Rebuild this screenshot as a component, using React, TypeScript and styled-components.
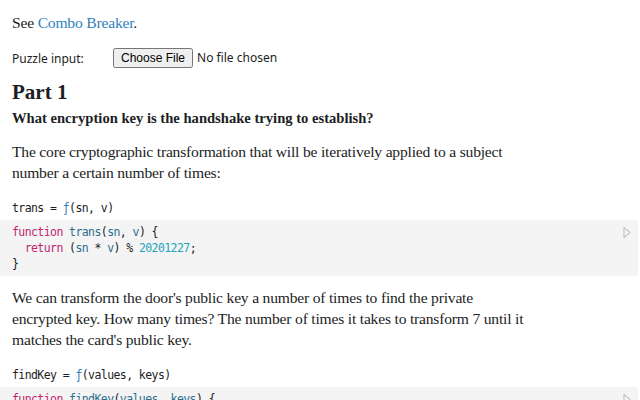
import React from "react";
import styled, { createGlobalStyle } from "styled-components";

const GlobalStyle = createGlobalStyle`
  html, body {
    margin: 0;
    padding: 0;
    background: #fff;
  }
  body {
    font-family: "Liberation Serif", serif;
    color: #1b1e23;
    overflow: hidden;
  }
`;

const Notebook = styled.div`
  display: flex;
  flex-direction: column;
  padding-top: 12px;
`;

const Prose = styled.p`
  font-size: 15.6px;
  letter-spacing: -0.2px;
  line-height: 21px;
  margin: 0;
  padding: 0 12px;
  max-width: 520px;
`;

const Link = styled.a`
  color: #3182bd;
  text-decoration: none;
`;

const InputRow = styled.form`
  display: flex;
  align-items: center;
  padding: 0 12px;
  margin-top: 15px;
  font-family: "Noto Sans", sans-serif;
  font-size: 12px;
`;

const InputLabel = styled.label`
  width: 101px;
`;

const FileInput = styled.input`
  font-family: "Noto Sans", sans-serif;
  font-size: 12px;
`;

const Heading = styled.h2`
  font-size: 21px;
  font-weight: 700;
  margin: 10px 0 0;
  padding: 0 12px;
  line-height: 28px;
`;

const Question = styled.h3`
  font-size: 14.6px;
  font-weight: 700;
  margin: 0 0 11px;
  padding: 0 12px;
  line-height: 24px;
`;

const mono = `
  font-family: "DejaVu Sans Mono", monospace;
  font-size: 11.5px;
  letter-spacing: -0.58px;
  line-height: 16px;
`;

const CellName = styled.div`
  ${mono}
  padding: 0 12px;
  margin-top: 17px;
  margin-bottom: 4px;
  white-space: pre;
`;

const Code = styled.pre`
  ${mono}
  position: relative;
  margin: 0 2px 11px 0;
  padding: 4px 12px;
  background: #f4f4f4;
  border-radius: 0 4px 4px 0;
  color: #1b1e23;
`;

const RunButton = styled.svg`
  position: absolute;
  top: 6px;
  right: 6px;
`;

const Kw = styled.span`
  color: #c3266f;
`;
const Def = styled.span`
  color: #2c6e8e;
`;
const Num = styled.span`
  color: #20a5ba;
`;
const Fn = styled.span`
  color: #3182bd;
`;

const Play = () => (
  <RunButton width="10" height="13" viewBox="0 0 10 13">
    <path d="M2 1.5 L8 6.5 L2 11.5 Z" fill="none" stroke="#c8c8c8" strokeWidth="1.3" strokeLinejoin="round" />
  </RunButton>
);

export default function App() {
  return (
    <>
      <GlobalStyle />
      <Notebook>
        <Prose>
          See <Link href="#">Combo Breaker</Link>.
        </Prose>
        <InputRow>
          <InputLabel>Puzzle input:</InputLabel>
          <FileInput type="file" />
        </InputRow>
        <Heading>Part 1</Heading>
        <Question>What encryption key is the handshake trying to establish?</Question>
        <Prose>
          The core cryptographic transformation that will be iteratively applied to a subject
          number a certain number of times:
        </Prose>
        <CellName>
          trans = <Fn>ƒ</Fn>(sn, v)
        </CellName>
        <Code>
          <Play />
          <Kw>function</Kw> <Def>trans</Def>(<Def>sn</Def>, <Def>v</Def>) {"{"}
          {"\n  "}
          <Kw>return</Kw> (<Def>sn</Def> * <Def>v</Def>) % <Num>20201227</Num>;{"\n"}
          {"}"}
        </Code>
        <Prose>
          We can transform the door's public key a number of times to find the private
          encrypted key. How many times? The number of times it takes to transform 7 until it
          matches the card's public key.
        </Prose>
        <CellName>
          findKey = <Fn>ƒ</Fn>(values, keys)
        </CellName>
        <Code>
          <Play />
          <Kw>function</Kw> <Def>findKey</Def>(<Def>values</Def>, <Def>keys</Def>) {"{"}
          {"\n  "}
          <Kw>let</Kw> <Def>i</Def> = <Num>0</Num>;
        </Code>
      </Notebook>
    </>
  );
}
